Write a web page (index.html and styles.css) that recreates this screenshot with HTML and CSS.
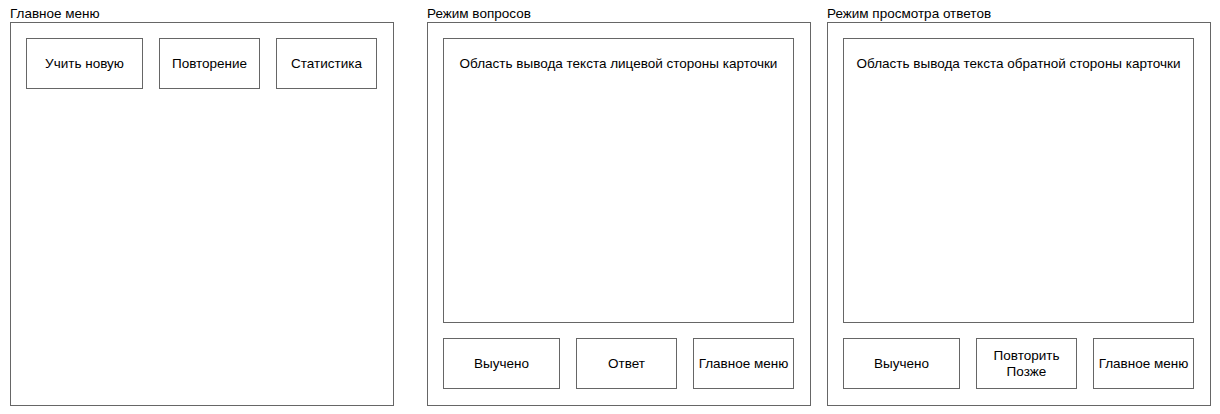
FILE: index.html
```html
<!DOCTYPE html>
<html lang="ru">
<head>
<meta charset="utf-8">
<title>Макет</title>
<link rel="stylesheet" href="styles.css">
</head>
<body>
<div class="page">
  <section class="col col-first">
    <div class="title">Главное меню</div>
    <div class="panel">
      <div class="btn-row">
        <div class="btn btn-wide">Учить новую</div>
        <div class="btn">Повторение</div>
        <div class="btn">Статистика</div>
      </div>
    </div>
  </section>
  <section class="col">
    <div class="title">Режим вопросов</div>
    <div class="panel">
      <div class="screen">Область вывода текста лицевой стороны карточки</div>
      <div class="btn-row">
        <div class="btn btn-wide">Выучено</div>
        <div class="btn">Ответ</div>
        <div class="btn">Главное меню</div>
      </div>
    </div>
  </section>
  <section class="col">
    <div class="title">Режим просмотра ответов</div>
    <div class="panel">
      <div class="screen">Область вывода текста обратной стороны карточки</div>
      <div class="btn-row">
        <div class="btn btn-wide">Выучено</div>
        <div class="btn">Повторить<br>Позже</div>
        <div class="btn">Главное меню</div>
      </div>
    </div>
  </section>
</div>
</body>
</html>
```
FILE: styles.css
```css
* { box-sizing: border-box; }
html, body { margin: 0; padding: 0; background: #fff; }
body {
  font-family: "Liberation Sans", Arial, sans-serif;
  font-size: 13.5px;
  color: #000;
}
.page {
  display: flex;
  gap: 16px;
  padding: 6px 0 0 10px;
}
.col { width: 384px; display: flex; flex-direction: column; }
.col-first { margin-right: 17px; }
.title {
  height: 16px;
  line-height: 16px;
  white-space: nowrap;
}
.panel {
  width: 384px;
  height: 384px;
  border: 1px solid #666;
  padding: 15px 16px 16px 15px;
  display: flex;
  flex-direction: column;
  gap: 15px;
}
.screen {
  flex: 1;
  border: 1px solid #666;
  padding-top: 17px;
  line-height: 16px;
  text-align: center;
  white-space: nowrap;
}
.btn-row {
  display: flex;
  justify-content: space-between;
}
.btn {
  width: 101px;
  height: 51px;
  border: 1px solid #666;
  display: flex;
  align-items: center;
  justify-content: center;
  text-align: center;
  line-height: 16px;
  white-space: nowrap;
}
.btn-wide { width: 117px; }
```
